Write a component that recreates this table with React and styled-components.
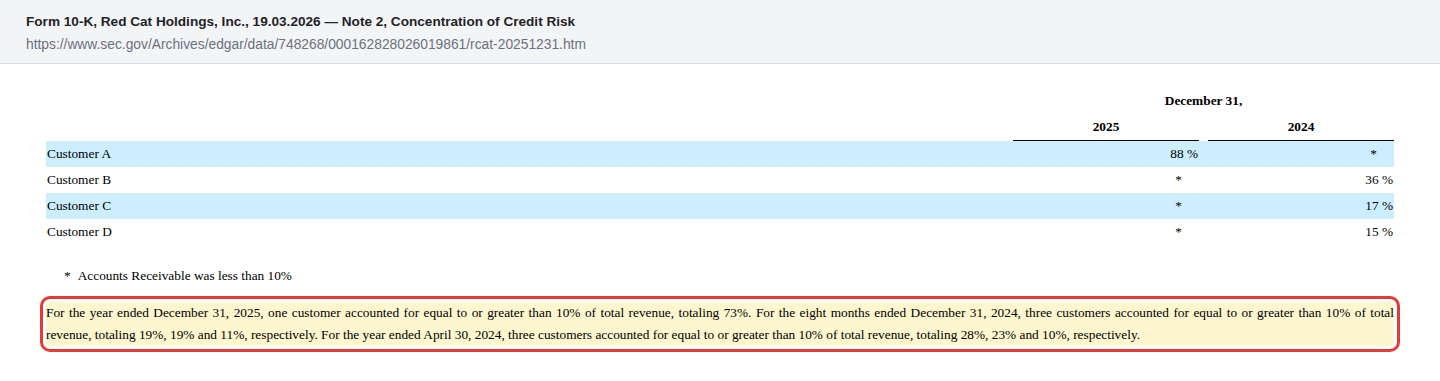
import styled, { createGlobalStyle } from 'styled-components'

const GlobalStyle = createGlobalStyle`
  body {
    margin: 0;
    background: #ffffff;
  }
`

const rows = [
  { name: 'Customer A', y2025: '88 %', y2024: '*' },
  { name: 'Customer B', y2025: '*', y2024: '36 %' },
  { name: 'Customer C', y2025: '*', y2024: '17 %' },
  { name: 'Customer D', y2025: '*', y2024: '15 %' },
]

const App = () => {
  return (
    <>
      <GlobalStyle />
      <Header>
        <Title>Form 10-K, Red Cat Holdings, Inc., 19.03.2026 — Note 2, Concentration of Credit Risk</Title>
        <Url>https://www.sec.gov/Archives/edgar/data/748268/000162828026019861/rcat-20251231.htm</Url>
      </Header>
      <Content>
        <Table>
          <colgroup>
            <col />
            <col style={{ width: 186 }} />
            <col style={{ width: 9 }} />
            <col style={{ width: 186 }} />
          </colgroup>
          <thead>
            <tr>
              <th />
              <HeadCell colSpan={3}>December 31,</HeadCell>
            </tr>
            <tr>
              <th />
              <HeadCell $rule>2025</HeadCell>
              <th />
              <HeadCell $rule>2024</HeadCell>
            </tr>
          </thead>
          <tbody>
            {rows.map((r, i) => (
              <Row key={r.name} $shaded={i % 2 === 0}>
                <Label>{r.name}</Label>
                <Value $star={r.y2025 === '*'}>{r.y2025}</Value>
                <td />
                <Value $star={r.y2024 === '*'}>{r.y2024}</Value>
              </Row>
            ))}
          </tbody>
        </Table>
        <Footnote>
          <span>*</span>
          Accounts Receivable was less than 10%
        </Footnote>
        <Highlight>
          For the year ended December 31, 2025, one customer accounted for equal to or greater than 10% of total revenue, totaling 73%. For the eight months ended December 31, 2024, three customers accounted for equal to or greater than 10% of total revenue, totaling 19%, 19% and 11%, respectively. For the year ended April 30, 2024, three customers accounted for equal to or greater than 10% of total revenue, totaling 28%, 23% and 10%, respectively.
        </Highlight>
      </Content>
    </>
  )
}

export default App

const Header = styled.div`
  height: 64px;
  box-sizing: border-box;
  background: #f3f4f6;
  border-bottom: 1px solid #d8dce2;
  padding: 13px 26px 0;
  font-family: "Liberation Sans", Arial, sans-serif;
`
const Title = styled.div`
  font-size: 13.6px;
  font-weight: 700;
  color: #1f2328;
  line-height: 17px;
`
const Url = styled.div`
  font-size: 13.8px;
  color: #6b7280;
  line-height: 17px;
  margin-top: 6px;
`
const Content = styled.div`
  padding: 24px 46px 40px;
  font-family: "Liberation Serif", "Times New Roman", serif;
  font-size: 13.333px;
  color: #000;
`
const Table = styled.table`
  width: 100%;
  border-collapse: collapse;
  table-layout: fixed;
  th, td {
    padding: 0;
  }
`
const HeadCell = styled.th`
  height: 26px;
  font-weight: 700;
  text-align: center;
  vertical-align: middle;
  border-bottom: ${p => (p.$rule ? '1px solid #000' : 'none')};
`
const Row = styled.tr`
  height: 26px;
  background: ${p => (p.$shaded ? '#cceeff' : 'transparent')};
`
const Label = styled.td`
  padding-left: 1px !important;
  vertical-align: middle;
`
const Value = styled.td`
  text-align: right;
  vertical-align: middle;
  padding-right: ${p => (p.$star ? '17px' : '1px')} !important;
`
const Footnote = styled.div`
  margin: 23px 0 0 18px;
  line-height: 16px;
  span {
    margin-right: 7px;
  }
`
const Highlight = styled.p`
  margin: 18px 0 0;
  background: #fdf6cf;
  line-height: 22px;
  text-align: justify;
  border-radius: 4px;
  outline: 3px solid #e53935;
  outline-offset: 3px;
`
